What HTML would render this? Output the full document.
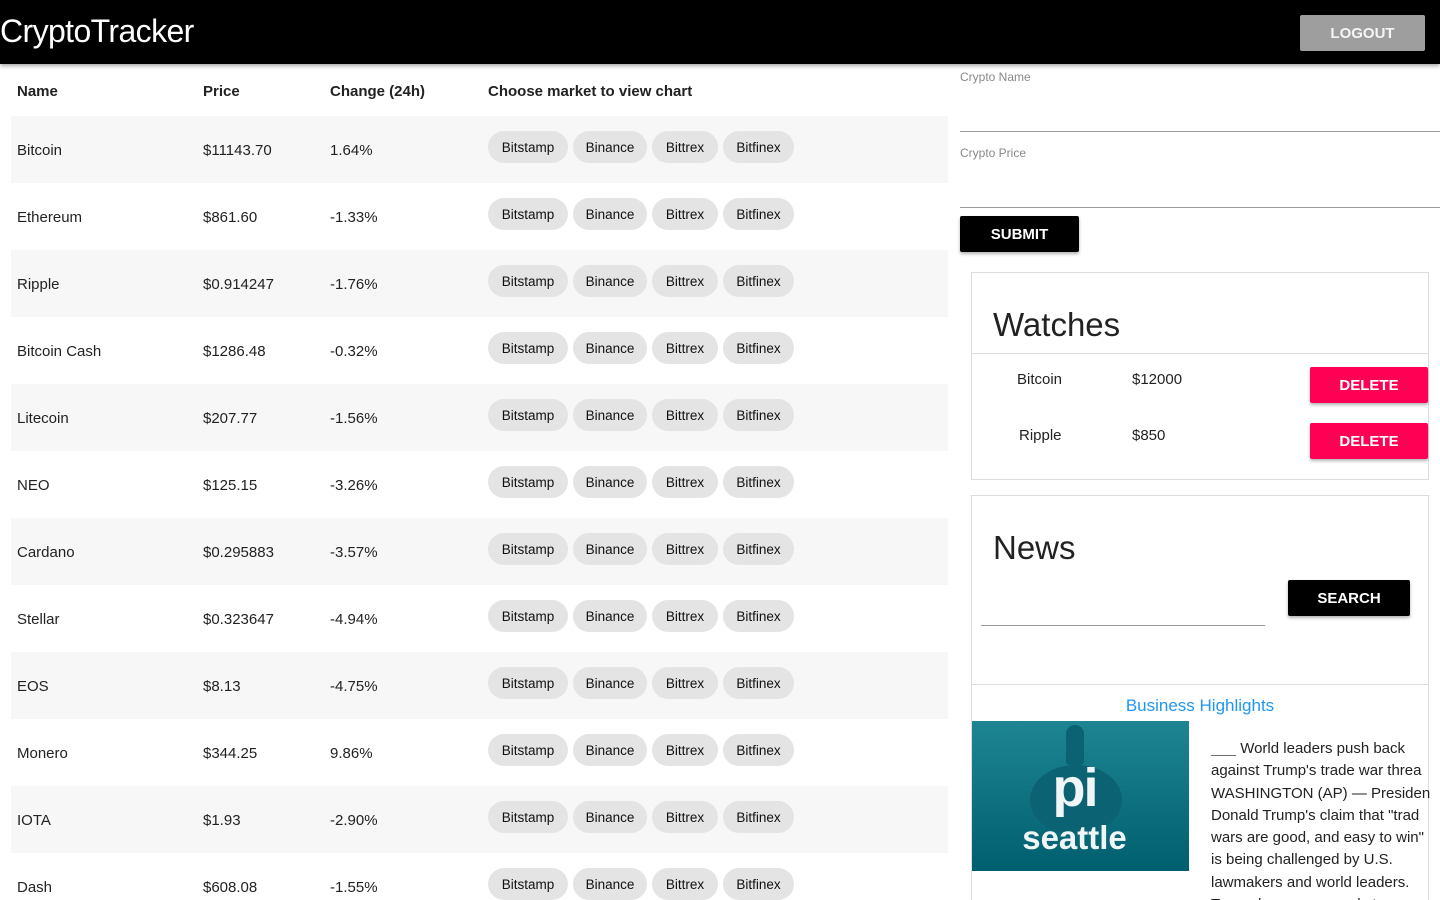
<!DOCTYPE html>
<html><head><meta charset="utf-8"><style>
*{margin:0;padding:0;box-sizing:border-box}
html{width:1440px;height:900px;overflow:hidden}
body{width:1440px;height:900px;overflow:hidden;background:#fff;font-family:"Liberation Sans",Arial,sans-serif;color:#222;position:relative}
.abs{position:absolute}
.hdr{left:0;top:0;width:1440px;height:64px;background:#000;box-shadow:0 2px 4px rgba(0,0,0,.35)}
.logo{left:0;top:13px;color:#fff;font-size:32px;letter-spacing:-0.6px}
.logout{left:1300px;top:15px;width:125px;height:36px;background:#9e9e9e;color:#f5f5f5;font-size:15px;font-weight:bold;text-align:center;line-height:38px;border-radius:2px}
.th{top:83px;font-size:15px;font-weight:bold;color:#222}
.row{left:11px;width:937px;height:67px}
.row.s{background:#f7f7f7}
.cell{position:absolute;top:26px;font-size:15px}
.chip{position:absolute;top:15px;height:32px;border-radius:16px;background:#e4e4e4;font-size:13.5px;line-height:33px;text-align:center;color:#111}
.lbl{font-size:12px;color:#888;left:960px}
.line{left:960px;width:480px;height:1px;background:#999}
.btn{background:#000;color:#fff;font-size:15px;font-weight:bold;text-align:center;border-radius:2px;box-shadow:0 2px 3px rgba(0,0,0,.3)}
.card{border:1px solid #ddd;background:#fff}
.del{left:1310px;width:118px;height:36px;background:#ff0055;color:#fff;font-weight:bold;font-size:15px;text-align:center;line-height:38px;border-radius:2px;box-shadow:0 2px 3px rgba(0,0,0,.3)}
</style></head><body>
<div class="abs hdr"></div>
<div class="abs logo">CryptoTracker</div>
<div class="abs logout">LOGOUT</div>

<div class="abs th" style="left:17px">Name</div>
<div class="abs th" style="left:203px">Price</div>
<div class="abs th" style="left:330px">Change (24h)</div>
<div class="abs th" style="left:488px">Choose market to view chart</div>

<div id="rows"></div>
<script>
var d=[["Bitcoin","$11143.70","1.64%"],["Ethereum","$861.60","-1.33%"],["Ripple","$0.914247","-1.76%"],["Bitcoin Cash","$1286.48","-0.32%"],["Litecoin","$207.77","-1.56%"],["NEO","$125.15","-3.26%"],["Cardano","$0.295883","-3.57%"],["Stellar","$0.323647","-4.94%"],["EOS","$8.13","-4.75%"],["Monero","$344.25","9.86%"],["IOTA","$1.93","-2.90%"],["Dash","$608.08","-1.55%"]];
var h="";
d.forEach(function(r,i){
h+='<div class="abs row'+(i%2==0?' s':'')+'" style="top:'+(116+67*i)+'px">'+
'<div class="cell" style="left:6px">'+r[0]+'</div><div class="cell" style="left:192px">'+r[1]+'</div><div class="cell" style="left:319px">'+r[2]+'</div>'+
'<div class="chip" style="left:477px;width:80px">Bitstamp</div><div class="chip" style="left:562px;width:74px">Binance</div><div class="chip" style="left:641px;width:66px">Bittrex</div><div class="chip" style="left:712px;width:71px">Bitfinex</div></div>';
});
document.getElementById("rows").innerHTML=h;
</script>

<div class="abs lbl" style="top:70px">Crypto Name</div>
<div class="abs line" style="top:131px"></div>
<div class="abs lbl" style="top:146px">Crypto Price</div>
<div class="abs line" style="top:207px"></div>
<div class="abs btn" style="left:960px;top:216px;width:119px;height:36px;line-height:38px">SUBMIT</div>

<div class="abs card" style="left:971px;top:272px;width:458px;height:208px"></div>
<div class="abs" style="left:993px;top:306px;font-size:33px;color:#222">Watches</div>
<div class="abs" style="left:972px;top:353px;width:456px;height:1px;background:#ddd"></div>
<div class="abs" style="left:1017px;top:371px;font-size:15px">Bitcoin</div>
<div class="abs" style="left:1132px;top:371px;font-size:15px">$12000</div>
<div class="abs del" style="top:367px">DELETE</div>
<div class="abs" style="left:1019px;top:427px;font-size:15px">Ripple</div>
<div class="abs" style="left:1132px;top:427px;font-size:15px">$850</div>
<div class="abs del" style="top:423px">DELETE</div>

<div class="abs card" style="left:971px;top:495px;width:458px;height:410px"></div>
<div class="abs" style="left:993px;top:529px;font-size:33px;color:#222">News</div>
<div class="abs btn" style="left:1288px;top:580px;width:122px;height:36px;line-height:38px">SEARCH</div>
<div class="abs" style="left:981px;top:625px;width:284px;height:1px;background:#999"></div>
<div class="abs" style="left:972px;top:684px;width:456px;height:1px;background:#ddd"></div>
<div class="abs" style="left:972px;top:696px;width:456px;text-align:center;font-size:17px;color:#2196f3">Business Highlights</div>
<div class="abs" style="left:972px;top:721px;width:217px;height:150px;background:linear-gradient(#1e8593,#005f6e);overflow:hidden">
<div class="abs" style="left:58px;top:44px;width:92px;height:70px;border-radius:50%;background:#0a6272"></div>
<div class="abs" style="left:94px;top:4px;width:18px;height:40px;border-radius:9px 9px 4px 4px;background:#0a6272"></div>
<div class="abs" style="left:0;top:36px;width:205px;text-align:center;color:#f0f6f6;font-size:54px;font-weight:bold;letter-spacing:-2px">pi</div>
<div class="abs" style="left:0;top:98px;width:205px;text-align:center;color:#f0f6f6;font-size:33px;font-weight:bold">seattle</div>
</div>
<div class="abs" style="left:1211px;top:738px;width:229px;font-size:15px;line-height:22.3px;color:#222;white-space:nowrap;overflow:hidden;height:162px">
<span style="color:#666">___</span> World leaders push back<br>against Trump's trade war threa<br>WASHINGTON (AP) — Presiden<br>Donald Trump's claim that "trad<br>wars are good, and easy to win"<br>is being challenged by U.S.<br>lawmakers and world leaders.<br>Trump has announced steep</div>
</body></html>
